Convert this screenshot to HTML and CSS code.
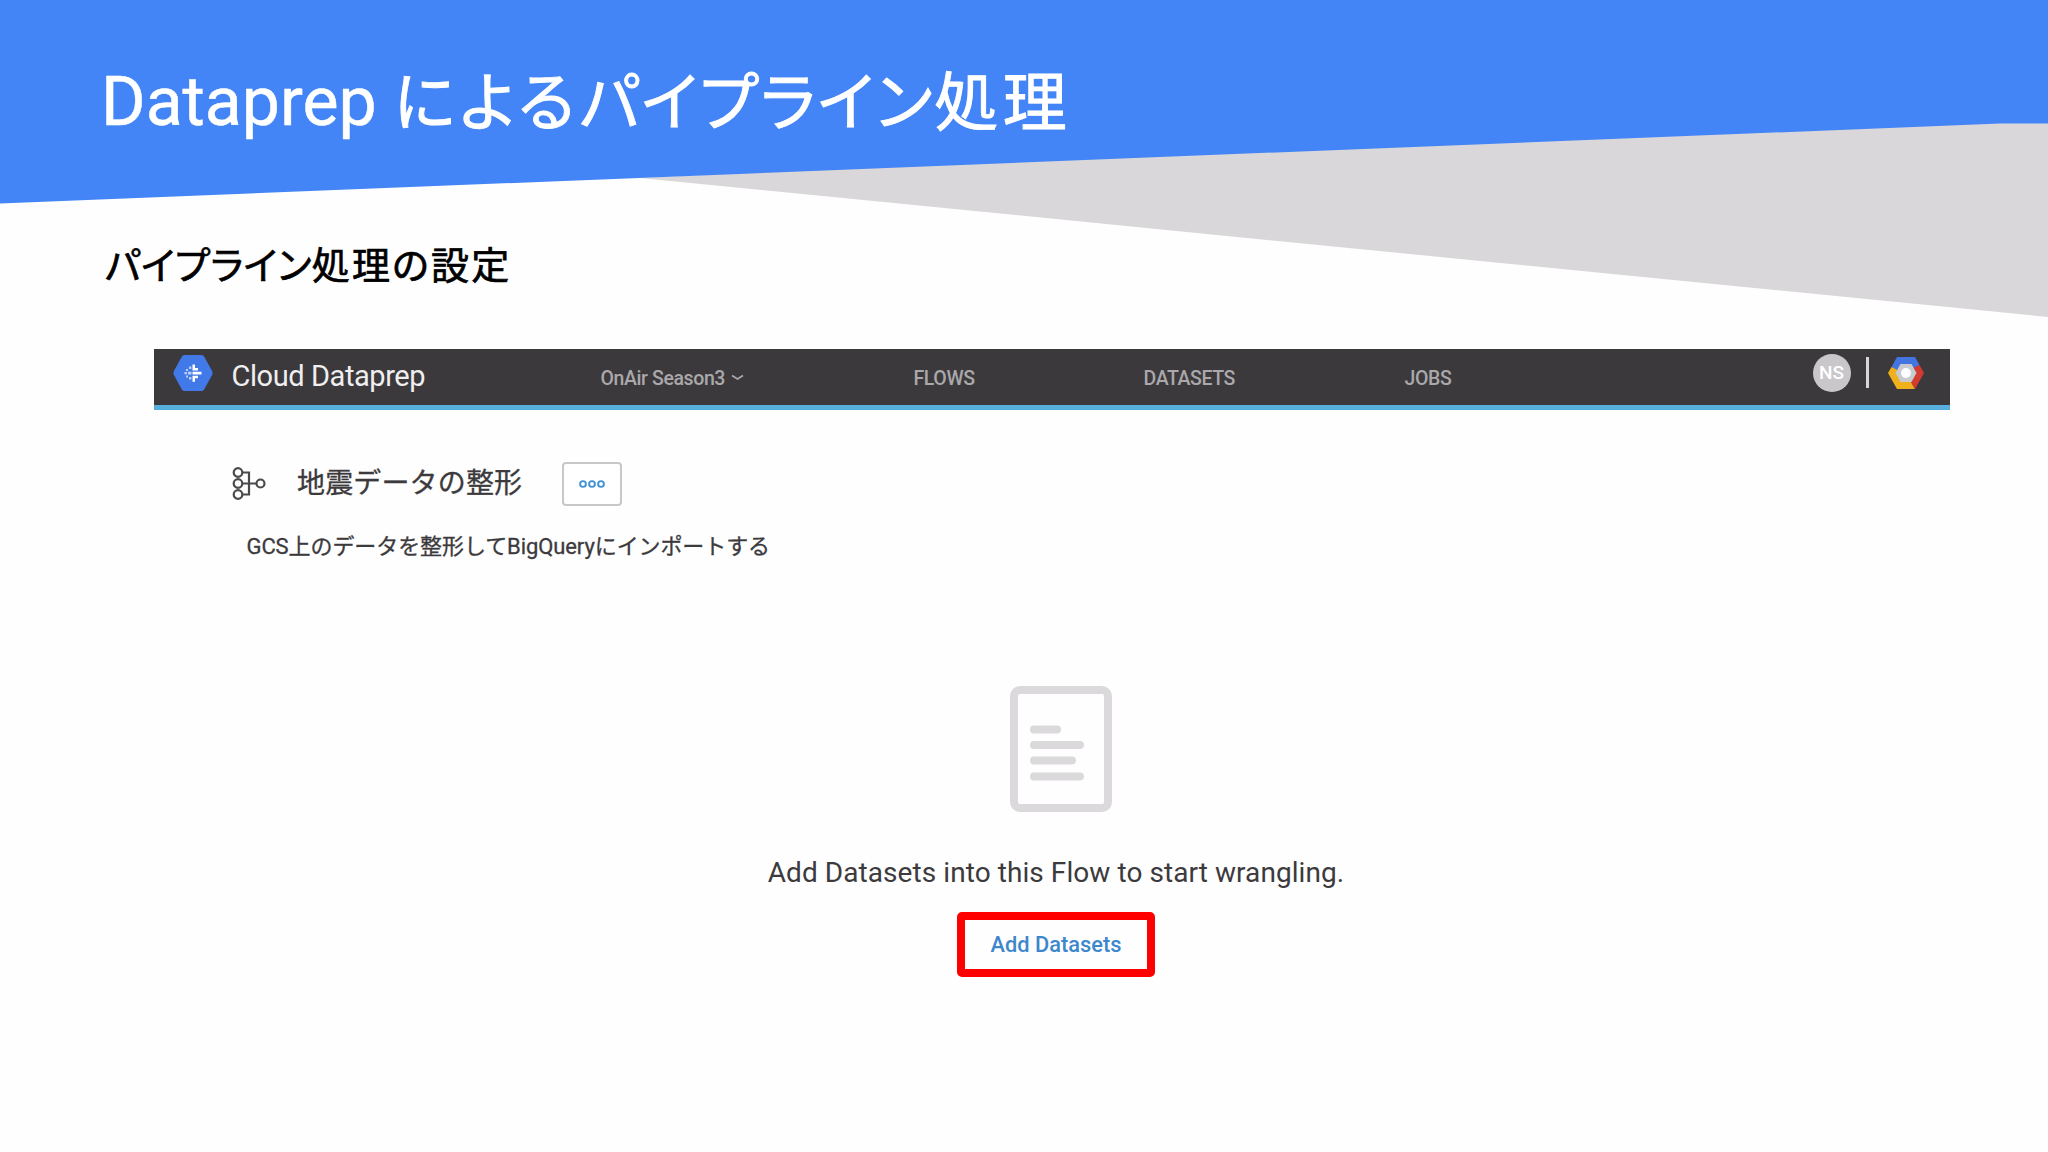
FILE: index.html
```html
<!DOCTYPE html>
<html lang="ja">
<head>
    <meta charset="UTF-8">
    <meta name="viewport" content="width=device-width, initial-scale=1.0">
    <title>Dataprep によるパイプライン処理</title>
    <link rel="stylesheet" href="styles.css">
</head>
<body>

<header class="slide-header">
    <svg class="slide-bg" viewBox="0 0 2048 320" width="2048" height="320">
        <polygon points="640,178 2048,110 2048,317" fill="#d9d7d9"/>
        <polygon points="0,0 2048,0 2048,123.5 2000,123.5 0,203.5" fill="#4385f6"/>
    </svg>
    <h1 class="slide-title">Dataprep <span class="jp">による<span class="katakana">パイプライン</span>処理</span></h1>
</header>

<h2 class="slide-subtitle"><span class="katakana">パイプライン</span>処理の設定</h2>

<div class="app">
    <nav class="navbar">
        <svg class="logo" viewBox="0 0 42 38" width="42" height="38">
            <path d="M12.500 1h17a3 3 0 0 1 2.600 1.500l8 14.500a4 4 0 0 1 0 4l-8 14.500a3 3 0 0 1-2.600 1.500h-17a3 3 0 0 1-2.600-1.500l-8-14.500a4 4 0 0 1 0-4l8-14.500A3 3 0 0 1 12.500 1z" fill="#4279e8"/>
            <path d="M20.500 10.500h2.500v3.500h3v2.400h-5.500zM20.500 17.800h9v2.600h-9zM20.500 21.800h5.500v2.400h-3v3.500h-2.500z" fill="#fff"/>
            <path d="M17 12.500h2.400v2.600H17zM16 17.800h3.500v2.600H16zM17 23h2.400v2.600H17zM14 15h2v2h-2zM12.500 18h2.500v2.200h-2.500zM14 21.500h2v2h-2z" fill="#b9d2fb"/>
        </svg>
        <span class="brand">Cloud Dataprep</span>
        <a class="nav-item project">OnAir Season3
            <svg viewBox="0 0 13 8" width="13" height="8"><path d="M1 1.500l5.500 3.500L12 1.500" fill="none" stroke="#aaa8aa" stroke-width="1.700"/></svg>
        </a>
        <a class="nav-item flows">FLOWS</a>
        <a class="nav-item datasets">DATASETS</a>
        <a class="nav-item jobs">JOBS</a>
        <span class="avatar">NS</span>
        <span class="separator"></span>
        <svg class="gcp" viewBox="0 0 36 32" width="36" height="32">
            <path d="M9 0h18l4.500 8-6 3.500-2-3h-11L9 13.500 3.500 10z" fill="#4374e0"/>
            <path d="M3.500 10L0 16l9 16h18l-4.500-8h-10L8 16l1.500-3z" fill="#efb01c"/>
            <path d="M31.500 8l4.500 8-9 16-4-7 5-9-3-5z" fill="#d33b30"/>
            <path d="M12.500 7h11l5 9-5 9h-11l-5-9z" fill="#c9c9d0"/>
            <circle cx="18" cy="16" r="5" fill="#fff"/>
        </svg>
    </nav>

    <div class="flow-head">
        <svg class="flow-icon" viewBox="0 0 34 34" width="34" height="34" fill="none" stroke="#4b494c" stroke-width="2.200">
            <circle cx="6" cy="5.500" r="4.300"/>
            <circle cx="6" cy="16.500" r="4.300"/>
            <circle cx="6" cy="27.500" r="4.300"/>
            <circle cx="28.500" cy="16.500" r="4"/>
            <path d="M10.500 5.500H17v22h-6.500M10.500 16.500h14"/>
        </svg>
        <span class="flow-name">地震データの整形</span>
        <button class="more" type="button">
            <svg viewBox="0 0 26 8" width="26" height="8" fill="none" stroke="#3f93d6" stroke-width="1.900">
                <circle cx="4" cy="4" r="2.900"/>
                <circle cx="13" cy="4" r="2.900"/>
                <circle cx="22" cy="4" r="2.900"/>
            </svg>
        </button>
    </div>
    <p class="flow-desc">GCS上のデータを整形してBigQueryにインポートする</p>

    <div class="empty">
        <svg class="doc" viewBox="0 0 102 126" width="102" height="126" fill="none" stroke="#dbd9dc" stroke-width="8">
            <rect x="4" y="4" width="94" height="118" rx="6"/>
            <g stroke-linecap="round">
                <path d="M24 43.500h23M24 59h46M24 74.500h38M24 90.500h46"/>
            </g>
        </svg>
        <p class="empty-text">Add Datasets into this Flow to start wrangling.</p>
        <button class="add" type="button">Add Datasets</button>
    </div>
</div>

</body>
</html>
```

FILE: styles.css
```css
body {
    margin: 0;
    width: 2048px;
    height: 1152px;
    overflow: hidden;
    background-color: #fefefe;
    font-family: Roboto, "Noto Sans CJK JP", sans-serif;
    color: #3c3a3d;
}

.slide-header {
    position: relative;
    height: 203px;
}

/* faixa azul e cinza atrás do título */
.slide-bg {
    position: absolute;
    top: 0;
    left: 0;
}

.slide-title {
    position: relative;
    margin: 0;
    padding-left: 101px;
    font-size: 68px;
    font-weight: 400;
    line-height: 205px;
    color: #fff;
    white-space: nowrap;
    -webkit-text-stroke: 0.5px #fff;
}

.jp {
    font-size: 64px;
    letter-spacing: 4.3px;
    font-feature-settings: "palt";
    -webkit-text-stroke: 0.9px #fff;
}

.jp .katakana {
    letter-spacing: 1.8px;
}

.slide-subtitle {
    margin: 33px 0 0;
    padding-left: 105px;
    font-size: 38px;
    font-weight: 400;
    letter-spacing: 2.2px;
    line-height: 60px;
    color: #000;
    font-feature-settings: "palt";
    -webkit-text-stroke: 0.7px #000;
}

.slide-subtitle .katakana {
    letter-spacing: 0.4px;
}

.app {
    width: 1796px;
    margin: 53px 0 0 153.5px;
}

.navbar {
    box-sizing: border-box;
    display: grid;
    grid-template-columns: 60px 369px 313px 230px 261px 408px 53px 22px 36px;
    align-items: start;
    height: 61px;
    padding-left: 18px;
    background-color: #3b393c;
    border-bottom: 5px solid #55aedb;
}

.logo {
    margin-top: 5px;
}

.brand {
    font-size: 29px;
    letter-spacing: -0.42px;
    line-height: 55px;
    color: #efeef0;
}

.nav-item {
    font-size: 19.5px;
    font-weight: 500;
    letter-spacing: -0.4px;
    line-height: 60px;
    color: #aaa8aa;
    white-space: nowrap;
}

.project svg {
    vertical-align: 3px;
    margin-left: 2px;
}

.avatar {
    width: 38px;
    height: 38px;
    margin-top: 5px;
    border-radius: 50%;
    background-color: #c9c7ca;
    color: #fff;
    font-size: 19px;
    font-weight: 500;
    line-height: 38px;
    text-align: center;
}

.separator {
    width: 3px;
    height: 31px;
    margin-top: 8px;
    background-color: #d8d6d9;
}

.gcp {
    margin-top: 8px;
}

.flow-head {
    display: flex;
    align-items: center;
    height: 44px;
    margin-top: 52px;
    padding-left: 78.5px;
}

.flow-name {
    width: 265px;
    margin-left: 31px;
    font-size: 28px;
    letter-spacing: 0.15px;
    line-height: 44px;
    white-space: nowrap;
    -webkit-text-stroke: 0.3px #3c3a3d;
}

.more {
    box-sizing: border-box;
    display: flex;
    align-items: center;
    justify-content: center;
    width: 60px;
    height: 44px;
    padding: 0;
    background-color: #fff;
    border: 2px solid #c9c7ca;
    border-radius: 4px;
}

.flow-desc {
    margin: 25px 0 0;
    padding-left: 93px;
    font-size: 22px;
    letter-spacing: -0.09px;
    line-height: 32px;
    white-space: nowrap;
    -webkit-text-stroke: 0.3px #3c3a3d;
}

.empty {
    display: flex;
    flex-direction: column;
    align-items: center;
    margin-top: 123px;
    padding-left: 9px;
}

.doc {
    margin-left: 9px;
}

.empty-text {
    margin: 41px 0 0;
    font-size: 28px;
    letter-spacing: 0.07px;
    line-height: 40px;
    white-space: nowrap;
}

.add {
    box-sizing: border-box;
    width: 198px;
    height: 65px;
    margin-top: 19px;
    padding: 0;
    background-color: #fefefe;
    border: 8px solid #fe0000;
    border-radius: 5px;
    color: #3d87cc;
    font-family: inherit;
    font-size: 21.8px;
    font-weight: 500;
}
```
